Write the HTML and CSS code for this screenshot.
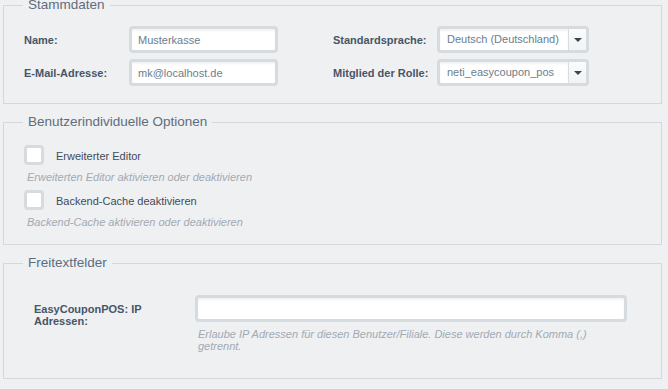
FILE: index.html
```html
<!DOCTYPE html>
<html lang="de">
<head>
    <meta charset="UTF-8">
    <title>Benutzer bearbeiten</title>
    <link rel="stylesheet" href="styles.css">
</head>
<body>
    <div class="user-form">
        <fieldset class="group group-base">
            <legend>Stammdaten</legend>
            <div class="base-grid">
                <label class="field-label" for="name">Name:</label>
                <input class="text-field" id="name" type="text" value="Musterkasse">
                <label class="field-label">Standardsprache:</label>
                <div class="combo">
                    <span class="combo-value">Deutsch (Deutschland)</span>
                    <span class="combo-trigger"><span class="arrow"></span></span>
                </div>

                <label class="field-label" for="email">E-Mail-Adresse:</label>
                <input class="text-field" id="email" type="text" value="mk@localhost.de">
                <label class="field-label">Mitglied der Rolle:</label>
                <div class="combo">
                    <span class="combo-value">neti_easycoupon_pos</span>
                    <span class="combo-trigger"><span class="arrow"></span></span>
                </div>
            </div>
        </fieldset>

        <fieldset class="group group-options">
            <legend>Benutzerindividuelle Optionen</legend>
            <div class="check-row">
                <span class="check-box"></span>
                <span class="check-label">Erweiterter Editor</span>
            </div>
            <div class="help">Erweiterten Editor aktivieren oder deaktivieren</div>
            <div class="check-row">
                <span class="check-box"></span>
                <span class="check-label">Backend-Cache deaktivieren</span>
            </div>
            <div class="help">Backend-Cache aktivieren oder deaktivieren</div>
        </fieldset>

        <fieldset class="group group-attr">
            <legend>Freitextfelder</legend>
            <div class="attr-row">
                <label class="field-label attr-label" for="ips">EasyCouponPOS: IP Adressen:</label>
                <div class="attr-field">
                    <input class="text-field wide" id="ips" type="text" value="">
                    <div class="help attr-help">Erlaube IP Adressen für diesen Benutzer/Filiale. Diese werden durch Komma (,) getrennt.</div>
                </div>
            </div>
        </fieldset>
    </div>
</body>
</html>
```

FILE: styles.css
```css
body {
    margin: 0;
    background-color: #eff0f2;
    font-family: "Liberation Sans", Arial, sans-serif;
    font-size: 11px;
    color: #475666;
}

.user-form {
    width: 659px;
    margin: -3px 0 0 3px;
}

.group {
    margin: 0 0 10px 0;
    padding: 13px 20px 17px 20px;
    border: 1px solid #d3d8dc;
    min-width: 0;
}

.group legend {
    margin-left: -1px;
    padding: 0 5px;
    font-size: 13.5px;
    line-height: 16px;
    color: #5e6d7c;
}

/* Stammdaten */
.base-grid {
    display: grid;
    grid-template-columns: 105px 149px 55px 104px 152px;
    grid-auto-rows: 27px;
    row-gap: 6px;
    align-items: center;
}

.base-grid .combo {
    grid-column: 5;
}

.base-grid label:nth-of-type(even) {
    grid-column: 4;
}

.field-label {
    font-weight: bold;
    color: #475666;
}

.text-field {
    box-sizing: border-box;
    height: 27px;
    width: 100%;
    margin: 0;
    padding: 0 6px;
    border: 3px solid #d5dbdf;
    border-radius: 4px;
    background: #ffffff;
    box-shadow: inset 0 2px 2px rgba(0, 0, 0, 0.05);
    font-family: inherit;
    font-size: 11px;
    color: #6b7d8e;
    outline: none;
}

.combo {
    box-sizing: border-box;
    height: 27px;
    display: flex;
    border: 3px solid #d5dbdf;
    border-radius: 4px;
    background: #ffffff;
}

.combo-value {
    flex: 1;
    padding-left: 7px;
    line-height: 21px;
    font-size: 11px;
    color: #6b7d8e;
    box-shadow: inset 0 2px 2px rgba(0, 0, 0, 0.05);
}

.combo-trigger {
    width: 17px;
    border-left: 1px solid #d8dde1;
    background: linear-gradient(#fafbfb, #f1f3f4);
    display: flex;
    align-items: center;
    justify-content: center;
}

.arrow {
    width: 0;
    height: 0;
    border-left: 4px solid transparent;
    border-right: 4px solid transparent;
    border-top: 4px solid #3c4650;
}

/* Optionen */
.group-options {
    padding-bottom: 15px;
}

.check-row {
    display: flex;
    align-items: center;
    height: 20px;
    margin-top: 6px;
}

.check-row:first-of-type {
    margin-top: 2px;
}

.check-box {
    box-sizing: border-box;
    width: 20px;
    height: 20px;
    border: 3px solid #d5dbdf;
    border-radius: 4px;
    background: #ffffff;
}

.check-label {
    margin-left: 12px;
    padding-top: 2px;
    color: #3f4b57;
}

.help {
    margin-top: 5px;
    padding-left: 3px;
    font-style: italic;
    line-height: 14px;
    color: #a1aab3;
}

/* Freitextfelder */
.attr-row {
    display: flex;
    margin-top: 11px;
    padding-left: 10px;
}

.attr-label {
    width: 150px;
    margin-right: 11px;
    padding-top: 8px;
    line-height: 12px;
}

.attr-field {
    width: 432px;
}

.attr-help {
    max-width: 415px;
    margin-top: 6px;
    margin-bottom: 9px;
    line-height: 12px;
}
```
